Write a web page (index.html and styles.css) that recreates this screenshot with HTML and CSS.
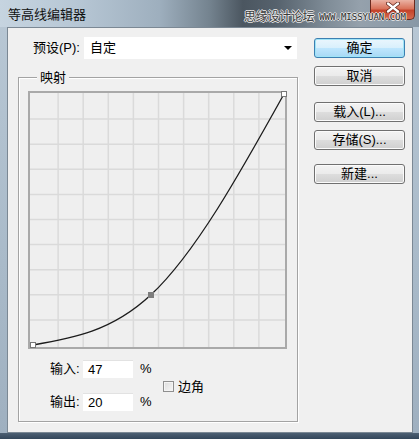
FILE: index.html
```html
<!DOCTYPE html>
<html lang="zh-CN">
<head>
<meta charset="utf-8">
<title>等高线编辑器</title>
<link rel="stylesheet" href="styles.css">
</head>
<body>
<div class="window">
  <div class="titlebar">
    <span class="title">等高线编辑器</span>
    <span class="close">
      <svg width="14" height="11" viewBox="0 0 14 11"><path d="M2 1.5 L12 9.5 M12 1.5 L2 9.5" stroke="#5a1d12" stroke-width="3.8" stroke-linecap="round"/><path d="M2 1.5 L12 9.5 M12 1.5 L2 9.5" stroke="#ffffff" stroke-width="2.4" stroke-linecap="round"/></svg>
    </span>
    <div class="watermark"><span class="wm-cn">思缘设计论坛</span><span class="wm-en">WWW.MISSYUAN.COM</span></div>
  </div>
  <div class="body">
    <div class="main">
      <div class="preset-row">
        <span class="preset-label">预设(P):</span>
        <div class="select"><span class="select-text">自定</span><span class="arrow"></span></div>
      </div>
      <div class="group">
        <div class="group-title">映射</div>
        <svg class="graph" width="259" height="258" viewBox="0 0 259 258">
          <rect x="1" y="1" width="257" height="256" fill="#efefef" stroke="#a9a9a9" stroke-width="2"/>
          <g stroke="#dadada" stroke-width="1.5">
            <path d="M30.1 2V256M55.2 2V256M80.3 2V256M105.4 2V256M130.5 2V256M155.6 2V256M180.7 2V256M205.8 2V256M230.9 2V256"/>
            <path d="M2 228.9H257M2 203.8H257M2 178.7H257M2 153.6H257M2 128.5H257M2 103.4H257M2 78.3H257M2 53.2H257M2 28.1H257"/>
          </g>
          <path d="M5 254 C44.3 247.3 83.6 240.6 123 203.8 C167.3 162.3 211.7 82.7 256 3" fill="none" stroke="#1c1c1c" stroke-width="1.3"/>
          <rect x="2.5" y="251.5" width="5" height="5" fill="#ffffff" stroke="#777" stroke-width="1"/>
          <rect x="253.5" y="0.5" width="5" height="5" fill="#ffffff" stroke="#777" stroke-width="1"/>
          <rect x="120" y="201" width="6" height="6" fill="#7d7d7d"/>
        </svg>
        <div class="io">
          <span class="io-label">输入:</span><span class="field">47</span><span class="pct">%</span>
          <label class="corner"><span class="checkbox"></span><span>边角</span></label>
          <span class="io-label">输出:</span><span class="field">20</span><span class="pct">%</span>
        </div>
      </div>
    </div>
    <div class="buttons">
      <span class="btn btn-default">确定</span>
      <span class="btn btn-cancel">取消</span>
      <span class="btn btn-load">载入(L)...</span>
      <span class="btn btn-save">存储(S)...</span>
      <span class="btn btn-new">新建...</span>
    </div>
  </div>
</div>
</body>
</html>
```

FILE: styles.css
```css
* { box-sizing: border-box; }
html, body { margin: 0; padding: 0; }
body {
  font-family: "Liberation Sans", "Noto Sans CJK SC", sans-serif;
  font-size: 13px;
  color: #000;
  background: #fff;
}
.window {
  width: 419px;
  height: 439px;
  display: flex;
  flex-direction: column;
  padding: 0 6px 6px 7px;
  background: linear-gradient(to bottom, #b9c8d5 0, #a9bac9 60%, #9fb0c0 calc(100% - 6px), #4d6073 calc(100% - 6px), #33465a 100%);
}
.titlebar {
  position: relative;
  height: 27px;
  margin: 0 -6px 0 -7px;
  display: flex;
  align-items: flex-start;
  background: linear-gradient(90deg, #c6d4e0 0%, #b7c7d5 18%, #9eafbe 38%, #74838f 50%, #4b5660 58%, #56626d 66%, #7f8c97 78%, #95a1ac 86%, #8898a6 100%);
}
.title {
  margin: 6px 0 0 8px;
  line-height: 16px;
  font-family: "Noto Sans CJK SC", sans-serif;
  font-size: 13px;
  color: #111;
}
.close {
  margin-left: auto;
  margin-right: 4px;
  width: 45px;
  height: 20px;
  border: 1px solid #6b2a1f;
  border-top: none;
  border-radius: 0 0 5px 5px;
  background: linear-gradient(to bottom, #eab2a4 0%, #d9735b 45%, #c4432b 55%, #d46a4f 100%);
  display: flex;
  align-items: center;
  justify-content: center;
  padding-bottom: 4px;
}
.watermark {
  position: absolute;
  left: 244px;
  top: 8px;
  display: flex;
  align-items: flex-end;
  gap: 5px;
  white-space: nowrap;
}
.wm-cn {
  font-family: "Noto Sans CJK SC", sans-serif;
  font-size: 12px;
  line-height: 16px;
  color: #3b3b3b;
  letter-spacing: -0.3px;
  text-shadow: 1px 0 0 #e8e8e8, -1px 0 0 #e8e8e8, 0 1px 0 #e8e8e8, 0 -1px 0 #e8e8e8;
}
.wm-en {
  font-family: "DejaVu Sans Mono", monospace;
  font-size: 9px;
  line-height: 11px;
  color: #2c2c2c;
  margin-bottom: 1px;
  text-shadow: 1px 0 0 #e6e6e6, -1px 0 0 #e6e6e6, 0 1px 0 #e6e6e6, 0 -1px 0 #e6e6e6;
}
.body {
  flex: 1;
  display: flex;
  background: #f0f0f0;
  border: 1px solid #7b8894;
  padding: 9px 7px 0 10px;
}
.main {
  width: 280px;
  display: flex;
  flex-direction: column;
}
.preset-row {
  display: grid;
  grid-template-columns: 66px 1fr;
  align-items: center;
  height: 22px;
}
.preset-label {
  padding-left: 15px;
  line-height: 16px;
  white-space: nowrap;
}
.select {
  height: 22px;
  background: #fff;
  display: flex;
  align-items: center;
  padding: 0 6px;
  margin-right: 1px;
}
.select-text { line-height: 16px; }
.arrow {
  margin-left: auto;
  width: 0;
  height: 0;
  border-left: 4px solid transparent;
  border-right: 4px solid transparent;
  border-top: 4px solid #000;
  margin-right: -1px;
}
.group {
  margin-top: 18px;
  border: 1px solid #a3a3a3;
  box-shadow: 1px 1px 0 #fff, inset 1px 1px 0 #fff;
  padding: 0 9px 10px 9px;
  display: flex;
  flex-direction: column;
}
.group-title {
  align-self: flex-start;
  margin: -9px 0 0 9px;
  padding: 0 3px;
  background: #f0f0f0;
  line-height: 16px;
  font-family: "Noto Sans CJK SC", sans-serif;
}
.graph {
  display: block;
  margin-top: 6px;
}
.io {
  margin-top: 11px;
  margin-left: 22px;
  display: grid;
  grid-template-columns: 33px 50px 30px auto;
  grid-template-rows: 18px 18px;
  row-gap: 15px;
  align-items: center;
}
.io-label { line-height: 16px; white-space: nowrap; }
.field {
  height: 18px;
  background: #fff;
  border-top: 1px solid #e2e2e2;
  padding-left: 5px;
  line-height: 17px;
}
.pct { padding-left: 7px; line-height: 16px; }
.corner {
  grid-column: 4;
  grid-row: 1 / span 2;
  display: flex;
  align-items: center;
  gap: 4px;
  line-height: 16px;
  margin-top: 2px;
}
.checkbox {
  width: 11px;
  height: 11px;
  border: 1px solid #8f8f8f;
  background: linear-gradient(135deg, #dcdcdc, #f7f7f7);
  box-shadow: inset 0 0 0 1px #f4f4f4;
}
.buttons {
  width: 91px;
  margin-left: 16px;
  display: flex;
  flex-direction: column;
  padding-top: 1px;
}
.btn {
  height: 20px;
  border: 1px solid #707070;
  border-radius: 3px;
  background: linear-gradient(to bottom, #f3f3f3 0%, #ebebeb 48%, #dddddd 52%, #cfcfcf 100%);
  box-shadow: inset 0 0 0 1px #fbfbfb;
  display: flex;
  align-items: center;
  justify-content: center;
  line-height: 16px;
  white-space: nowrap;
}
.btn-default {
  border-color: #3c7fb1;
  box-shadow: inset 0 0 0 1px #9fe4f7;
  background: linear-gradient(to bottom, #eaf6fd 0%, #d9f0fc 48%, #bee6fd 52%, #a7d9f5 100%);
}
.btn-cancel { margin-top: 8px; }
.btn-load { margin-top: 16px; }
.btn-save { margin-top: 8px; }
.btn-new { margin-top: 14px; }
```
